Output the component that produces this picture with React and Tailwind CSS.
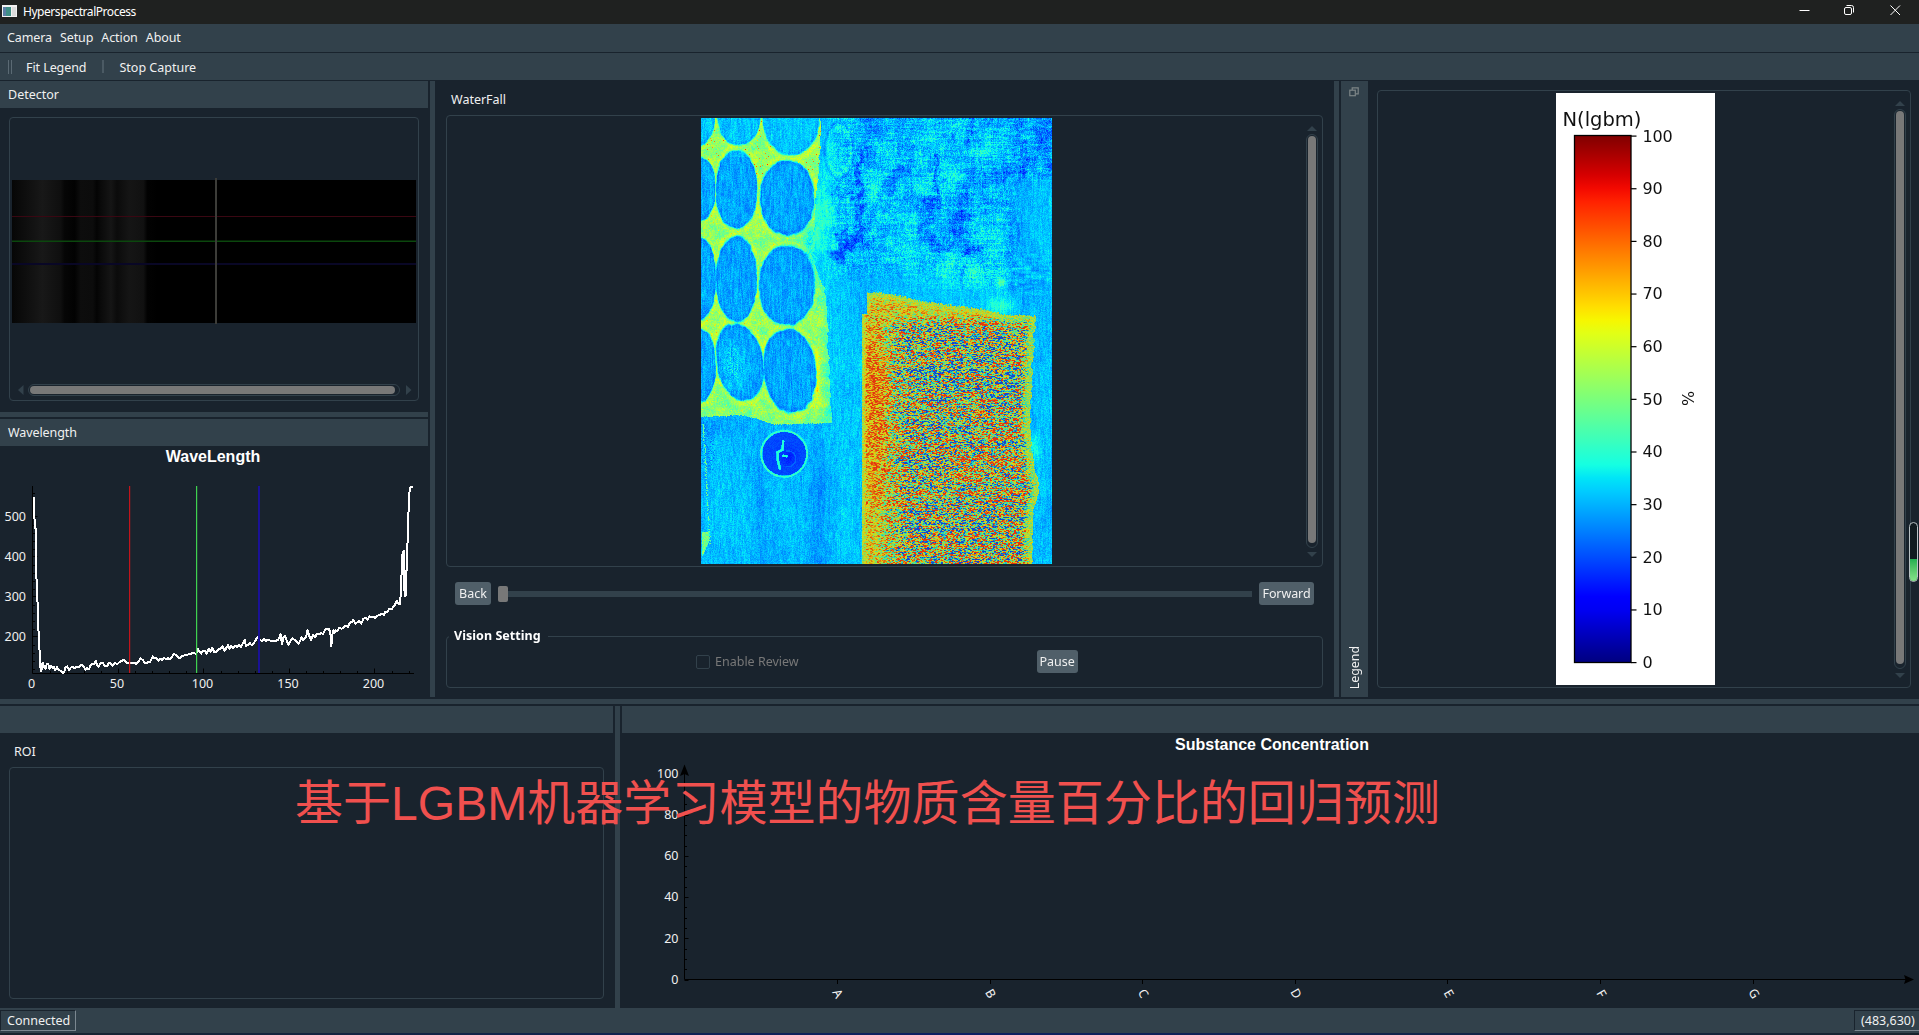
import { useLayoutEffect, useRef } from "react";

const clamp = (v, a = 0, b = 1) => Math.min(b, Math.max(a, v));
const lerp = (a, b, t) => a + (b - a) * t;
const smooth = (a, b, v) => {
  const t = clamp((v - a) / (b - a));
  return t * t * (3 - 2 * t);
};

const ramp = (stops, t) => {
  for (let i = 1; i < stops.length; i++) {
    if (t <= stops[i][0]) {
      const [x0, y0] = stops[i - 1];
      const [x1, y1] = stops[i];
      return lerp(y0, y1, (t - x0) / (x1 - x0));
    }
  }
  return stops[stops.length - 1][1];
};
const RED = [[0, 0], [0.35, 0], [0.66, 1], [0.89, 1], [1, 0.5]];
const GREEN = [[0, 0], [0.125, 0], [0.375, 1], [0.64, 1], [0.91, 0], [1, 0]];
const BLUE = [[0, 0.5], [0.11, 1], [0.34, 1], [0.65, 0], [1, 0]];
const jet = (v) => {
  const t = clamp(v);
  return [ramp(RED, t) * 255, ramp(GREEN, t) * 255, ramp(BLUE, t) * 255];
};

const hash = (x, y, s = 0) => {
  let h = (x * 374761393 + y * 668265263 + s * 1442695041) | 0;
  h = Math.imul(h ^ (h >>> 13), 1274126177);
  h ^= h >>> 16;
  return (h >>> 0) / 4294967295;
};
const noise = (x, y, s = 0) => {
  const xi = Math.floor(x);
  const yi = Math.floor(y);
  const fx = x - xi;
  const fy = y - yi;
  const u = fx * fx * (3 - 2 * fx);
  const w = fy * fy * (3 - 2 * fy);
  return lerp(
    lerp(hash(xi, yi, s), hash(xi + 1, yi, s), u),
    lerp(hash(xi, yi + 1, s), hash(xi + 1, yi + 1, s), u),
    w
  );
};
const fbm = (x, y, s = 0) =>
  noise(x, y, s) * 0.5 + noise(x * 2.1, y * 2.1, s + 1) * 0.28 + noise(x * 4.3, y * 4.3, s + 2) * 0.22;

const polyAt = (pts, v) => ramp(pts, v);

// Wells of the tray: centre x, centre y, radius x, radius y, slant
const WELLS = [
  [20, 20, 52, 86, 0], [145, 16, 64, 88, 0], [302, 14, 85, 120, 0],
  [28, 235, 47, 94, 0], [138, 237, 62, 117, 0], [290, 262, 81, 112, 0],
  [26, 505, 50, 124, 0], [138, 506, 61, 127, 0], [289, 525, 83, 119, 0],
  [26, 765, 50, 110, 0], [148, 755, 70, 114, 0.12], [298, 781, 78, 125, 0.06],
];
const TRAY_BOTTOM = [[33, 920], [150, 914], [200, 925], [250, 942], [430, 938]];
const TRAY_RIGHT = [[24, 392], [190, 386], [250, 374], [330, 372], [450, 372], [520, 396], [560, 408], [740, 414], [940, 424]];
const CLOTH_TOP = [[515, 612], [530, 545], [600, 550], [700, 573], [880, 597], [940, 612], [1038, 616]];
const CLOTH_RIGHT = [[540, 1036], [640, 1034], [740, 1027], [960, 1019], [1050, 1028], [1100, 1042], [1170, 1040], [1200, 1028], [1362, 1027]];
// Dark streaks in the upper right: x0, y0, x1, y1, half width, depth
const STREAKS = [
  [510, 130, 512, 260, 9, 0.13], [430, 250, 520, 250, 9, 0.08], [500, 290, 500, 370, 12, 0.1],
  [440, 430, 510, 370, 13, 0.13], [450, 380, 520, 390, 8, 0.1], [570, 260, 640, 180, 12, 0.08],
  [540, 340, 580, 270, 10, 0.06], [740, 130, 740, 290, 6, 0.1], [850, 30, 820, 110, 10, 0.09],
  [710, 270, 690, 370, 16, 0.08], [820, 250, 810, 380, 16, 0.09], [690, 370, 780, 410, 11, 0.09],
  [835, 412, 862, 412, 10, 0.12], [990, 60, 990, 190, 12, 0.08], [830, 210, 960, 180, 12, 0.06],
  [520, 40, 640, 60, 24, 0.05], [500, 160, 570, 40, 14, 0.05], [1060, 24, 1068, 170, 18, 0.07],
];

const segDist = (px, py, x0, y0, x1, y1) => {
  const dx = x1 - x0;
  const dy = y1 - y0;
  const t = clamp(((px - x0) * dx + (py - y0) * dy) / (dx * dx + dy * dy));
  return Math.hypot(px - x0 - t * dx, py - y0 - t * dy);
};
const blob = (u, v, x, y, rx, ry) => Math.exp(-(((u - x) / rx) ** 2 + ((v - y) / ry) ** 2));

function fieldAt(x, y) {
  const u = x * 3 + 33;
  const v = y * 3 + 24;
  const grain = hash(x, y, 3) - 0.5;
  const column = noise(x * 0.9, y * 0.12, 8) - 0.5;
  let t = 0.314 + grain * 0.06 + column * 0.055;
  t += (fbm(u / 90, v / 300, 20) - 0.5) * 0.05;

  // Smooth surface in the lower left
  if (v > 900 && u < 440) {
    t -= 0.008;
    t -= blob(u, v, 210, 1260, 22, 260) * 0.03 + blob(u, v, 385, 1180, 24, 260) * 0.035;
    t -= blob(u, v, 80, 950, 60, 30) * 0.03;
  }

  // Crumpled film in the upper right
  const film = smooth(385, 470, u) * (1 - smooth(430, 540, v - Math.max(0, u - 620) * 0.12)) * (1 - smooth(935, 1010, u) * smooth(180, 230, v));
  if (film > 0) {
    const wrinkle = fbm(u / 30, v / 40, 40) - 0.5;
    const row = noise(u / 60, y * 0.8, 60) - 0.5;
    t += film * (wrinkle * 0.13 + row * 0.07 + grain * 0.05 + 0.002);
    const wx = u + (fbm(u / 24, v / 24, 70) - 0.5) * 70;
    const wy = v + (fbm(u / 24, v / 24, 75) - 0.5) * 70;
    let dark = 0;
    for (const s of STREAKS) {
      const d = segDist(wx, wy, s[0], s[1], s[2], s[3]);
      dark = Math.max(dark, s[5] * (1 - smooth(s[4] * 0.3, s[4] * 2.3, d)));
    }
    t -= dark * (0.45 + noise(x * 0.6, y * 0.6, 77) * 0.75);
    t = Math.max(t, 0.16 + grain * 0.04);
  }
  t -= blob(u, v, 975, 330, 45, 170) * 0.035;
  t += blob(u, v, 820, 490, 130, 50) * (0.035 + (noise(x * 0.5, y * 0.6, 81) - 0.5) * 0.1);
  t += blob(u, v, 932, 515, 14, 16) * 0.14 + blob(u, v, 935, 585, 40, 24) * 0.09;
  t += blob(u, v, 385, 330, 55, 140) * (0.07 + (fbm(u / 20, v / 20, 83) - 0.5) * 0.12);
  t += blob(u, v, 1035, 1010, 18, 40) * 0.07;
  if (u > 960) t += (noise(x * 0.15, y * 0.5, 87) - 0.5) * 0.04 * blob(u, v, 1010, 490, 80, 70) * 3;

  // Faint oval next to the tray
  const oval = Math.hypot((u - 446) / 38, (v - 120) / 74);
  t += Math.exp(-(((oval - 0.94) / 0.09) ** 2)) * 0.03 - Math.exp(-(((oval - 1.14) / 0.07) ** 2)) * 0.04;
  t -= Math.exp(-(((Math.hypot((u - 458) / 16, (v - 130) / 28) - 1) / 0.2) ** 2)) * 0.035;

  // Tray with its wells
  const edge = polyAt(TRAY_RIGHT, v) + (noise(u / 8, v / 14, 90) - 0.5) * 8;
  const bottom = polyAt(TRAY_BOTTOM, u) + (hash(x, 1, 91) - 0.5) * 4;
  if (u < edge && v < bottom) {
    let nearest = 9;
    for (const [cx, cy, rx, ry, k] of WELLS) {
      const dx = (u - cx - (v - cy) * k) / rx;
      const dy = (v - cy) / ry;
      const d = Math.pow(Math.pow(Math.abs(dx), 2.15) + Math.pow(Math.abs(dy), 2.15), 1 / 2.15);
      nearest = Math.min(nearest, d);
    }
    const wob = (noise(u / 14, v / 14, 93) - 0.5) * 0.06;
    const m = smooth(0.97, 1.05, nearest + wob);
    let net = 0.515 + grain * 0.1 + (fbm(u / 22, v / 22, 95) - 0.5) * 0.16;
    net += Math.exp(-(((nearest - 1.1) / 0.06) ** 2)) * 0.05;
    net -= blob(u, v, 375, 430, 65, 100) * 0.14 + smooth(385, 420, u) * 0.07;
    net += blob(u, v, 380, 810, 10, 90) * 0.08;
    if (hash(x, y, 97) > 0.98) net += 0.1 + (v < 200 ? 0.15 : 0);
    let well = 0.288 + grain * 0.06 + column * 0.07 - Math.exp(-(((nearest - 0.95) / 0.05) ** 2)) * 0.02;
    well += blob(u, v, 125, 760, 35, 70) * (hash(x, y, 99) * 0.1);
    if (v < 140) well += 0.03;
    t = lerp(well, net, m);
  }

  // Coin
  const r = Math.hypot(u - 281, v - 1030);
  if (r < 74) {
    const inner = 0.195 + grain * 0.03 - blob(u, v, 295, 1040, 22, 24) * 0.04;
    t = r < 65 ? inner : lerp(t, 0.41 + grain * 0.08, 1 - smooth(1, 4.5, Math.abs(r - 69)));
    const mark = Math.min(
      segDist(u, v, 278, 992, 276, 1018), segDist(u, v, 276, 1018, 260, 1026),
      segDist(u, v, 262, 1026, 262, 1050), segDist(u, v, 262, 1050, 268, 1074), segDist(u, v, 278, 1036, 288, 1037)
    );
    if (mark < 4.2) t = 0.42 - mark * 0.02;
    if (Math.abs(Math.hypot(u - 292, v - 1045) - 24) < 2 && u > 285) t = 0.225;
  }

  // Speckled strip on the left border
  const strip = 44 + (v - 1040) * 0.055;
  if (v > 940 && v < 1300 && Math.abs(u - strip) < 3 && hash(x, y, 101) > 0.5) t = 0.4 + hash(x, y, 102) * 0.1;
  if (v > 930 && v < 1080 && u < 75 && hash(x, y, 103) > 0.85) t = 0.24;
  if (v > 1265 && v < 1345 && u < 55 - Math.max(0, v - 1295) * 0.45 && u > 33) t = 0.48 + grain * 0.14;

  // Woven cloth
  const left = v < 612 ? 528 : 514;
  const right = polyAt(CLOTH_RIGHT, v) + (noise(3, v / 10, 104) - 0.5) * 8;
  const top = polyAt(CLOTH_TOP, u) + (hash(x, 2, 105) - 0.5) * 6;
  if (u > left && u < right && v > top) {
    const xx = Math.floor(x / 2 + (hash(0, y, 112) > 0.5 ? 0.5 : 0));
    const n = hash(xx, y, 106) * 0.62 + hash(x, y, 110) * 0.22 + noise(x * 0.3, y * 0.5, 107) * 0.16;
    const band = noise(u / 120, y * 0.34, 108) - 0.5;
    const fine = (y % 3 === 0 ? -0.06 : 0.02) + (noise(u / 50, y * 0.9, 111) - 0.5) * 0.18;
    const cool = smooth(600, 660, v) * smooth(540, 660, u);
    const hot = blob(u, v, 560, 930, 45, 240) * 0.12 + blob(u, v, 550, 780, 35, 130) * 0.05;
    const rim = Math.min((u - left) * 1.2, (right - u) * 0.55, (v - top) * 0.8);
    t = 0.645 + (n - 0.5) * lerp(0.5, 1.3, cool) + (band * 0.3 + fine) * cool - cool * 0.085 + hot;
    t -= blob(u, v, 850, 780, 170, 130) * 0.06 + blob(u, v, 760, 1220, 200, 90) * 0.03;
    if (rim < 16) t = lerp(0.55 + grain * 0.25, t, rim / 20);
    t = clamp(t, 0.19, 0.86);
    return [t, true];
  }
  return [t, false];
}

function WaterfallImage() {
  const ref = useRef(null);
  useLayoutEffect(() => {
    const ctx = ref.current.getContext("2d");
    const W = 351;
    const H = 446;
    const img = ctx.createImageData(W, H);
    for (let y = 0; y < H; y++) {
      for (let x = 0; x < W; x++) {
        const [t, cloth] = fieldAt(x, y);
        let [r, g, b] = jet(t);
        if (cloth) {
          r = r * 0.8 + 22;
          g = g * 0.8 + 16;
          b = b * 0.74 + 16;
        }
        const i = (y * W + x) * 4;
        img.data[i] = r;
        img.data[i + 1] = g;
        img.data[i + 2] = b;
        img.data[i + 3] = 255;
      }
    }
    ctx.putImageData(img, 0, 0);
  }, []);
  return <canvas ref={ref} width={351} height={446} className="block h-[446px] w-[351px]" />;
}

const WAVE =
  "101,289 102,380 105,385 107,500 109,600 112,610 113,690 116,700 117,765 119,800 122,814 124,800 126,787 131,800 135,805 138,792 143,791 147,806 151,797 156,802 160,800 164,811 169,801 174,808 179,811 185,817 191,817 194,803 200,798 205,810 210,803 216,799 221,803 227,801 233,801 238,798 244,793 249,799 254,808 259,803 265,808 270,795 276,791 281,792 286,782 290,795 294,800 300,789 306,787 312,796 320,797 325,787 330,789 336,797 343,788 350,792 357,785 363,783 369,778 375,784 381,789 388,787 394,788 401,788 407,791 413,785 420,775 427,780 433,788 440,787 447,786 452,779 456,769 461,775 466,773 473,782 478,775 484,779 490,773 496,777 502,774 508,778 515,769 520,762 527,764 532,771 537,774 543,768 550,766 557,765 564,762 571,761 579,757 586,762 592,747 597,755 602,760 607,752 612,752 618,760 624,746 629,755 635,742 641,757 647,754 653,748 660,745 666,739 672,751 677,744 682,735 687,746 692,737 698,744 704,737 710,740 716,734 722,740 727,728 732,719 736,737 742,735 748,729 753,735 758,731 764,722 770,711 777,720 784,722 790,717 796,723 802,718 810,722 818,721 826,722 832,719 836,712 840,701 844,732 849,711 854,708 859,723 864,733 870,722 875,714 882,719 888,724 894,731 898,723 903,711 908,720 914,713 918,704 921,689 926,707 931,719 937,705 943,712 949,701 955,702 961,699 967,701 973,690 979,685 985,687 989,695 992,739 996,700 998,690 1001,700 1004,690 1010,692 1016,683 1023,686 1030,680 1037,676 1042,680 1048,667 1054,665 1058,659 1065,670 1071,666 1076,662 1082,671 1088,656 1095,652 1101,658 1107,648 1113,651 1119,651 1125,653 1131,646 1138,644 1144,640 1150,644 1155,634 1160,636 1166,625 1172,628 1178,620 1184,612 1189,602 1194,612 1199,610 1201,560 1204,500 1206,455 1209,452 1211,560 1213,588 1216,585 1218,500 1221,420 1223,350 1227,270 1229,261 1238,260";

const ui = "font-['Noto_Sans','Noto_Sans_CJK_SC',sans-serif]";

function Detector() {
  return (
    <div className="ml-[9px] mt-[9px] flex h-[284px] w-[410px] flex-col rounded border border-[#32414b]">
      <svg className="mt-[60px] ml-[2px] block" width="404" height="146" viewBox="0 0 404 146">
        <defs>
          <linearGradient id="bands" x1="0" x2="1" y1="0" y2="0">
            <stop offset="0" stopColor="#060606" />
            <stop offset="0.02" stopColor="#0b0b0b" />
            <stop offset="0.055" stopColor="#131313" />
            <stop offset="0.075" stopColor="#181818" />
            <stop offset="0.1" stopColor="#131313" />
            <stop offset="0.12" stopColor="#0f0f0f" />
            <stop offset="0.13" stopColor="#060606" />
            <stop offset="0.155" stopColor="#020202" />
            <stop offset="0.17" stopColor="#0d0d0d" />
            <stop offset="0.2" stopColor="#0c0c0c" />
            <stop offset="0.21" stopColor="#040404" />
            <stop offset="0.22" stopColor="#0a0a0a" />
            <stop offset="0.245" stopColor="#151515" />
            <stop offset="0.26" stopColor="#0b0b0b" />
            <stop offset="0.29" stopColor="#151515" />
            <stop offset="0.325" stopColor="#111111" />
            <stop offset="0.335" stopColor="#020202" />
            <stop offset="0.36" stopColor="#000000" />
          </linearGradient>
        </defs>
        <rect x="0" y="2" width="404" height="143" fill="#000" />
        <rect x="0" y="2" width="404" height="143" fill="url(#bands)" />
        <rect x="0" y="38" width="404" height="1" fill="#3a0712" />
        <rect x="0" y="62.5" width="404" height="1.5" fill="#0b470d" />
        <rect x="0" y="85" width="404" height="2" fill="#090726" />
        <rect x="203" y="0" width="2" height="146" fill="#3c3c38" />
      </svg>
      <div className="mt-auto mb-[4px] flex h-[12px] items-center pl-[8px] pr-[6px]">
        <svg width="6" height="10" viewBox="0 0 6 10"><path d="M5.5 0v10L0 5z" fill="#32414b" /></svg>
        <div className="ml-[4px] h-[12px] w-[372px] rounded-full border border-[#32414b] p-px">
          <div className="h-[8px] w-[365px] rounded-full bg-[#787878]" />
        </div>
        <svg className="ml-auto" width="6" height="10" viewBox="0 0 6 10"><path d="M0 0v10L5.5 5z" fill="#32414b" /></svg>
      </div>
    </div>
  );
}

function WavelengthChart() {
  const minorY = [];
  for (let v = 120; v <= 560; v += 20) if (v % 100) minorY.push(716.5 - 0.4 * v);
  const minorX = [];
  for (let v = 10; v < 223; v += 10) if (v % 50) minorX.push(32.5 + v * 1.71);
  return (
    <svg className={`block ${ui}`} width="428" height="251" viewBox="0 446 428 251" fill="#f0f0f0" fontSize="12.5">
      <text x="213" y="462" textAnchor="middle" fontSize="16" fontWeight="700" fill="#fff" className="font-['Liberation_Sans',sans-serif]">WaveLength</text>
      <g stroke="#000" strokeWidth="1">
        <path d="M32.5 486V673.5H414" fill="none" />
        {[200, 300, 400, 500].map((v) => <path key={v} d={`M32.5 ${716.5 - 0.4 * v}h5`} />)}
        {minorY.map((y) => <path key={y} d={`M32.5 ${Math.round(y) + 0.5}h2.5`} />)}
        {[50, 100, 150, 200].map((v) => <path key={v} d={`M${Math.round(32 + v * 1.71) + 0.5} 673.5v-5`} />)}
        {minorX.map((x) => <path key={x} d={`M${Math.round(x) + 0.5} 673.5v-2.5`} />)}
      </g>
      {[500, 400, 300, 200].map((v) => <text key={v} x="26" y={721 - 0.4 * v} textAnchor="end">{v}</text>)}
      {[0, 50, 100, 150, 200].map((v) => <text key={v} x={31.5 + v * 1.71} y="688" textAnchor="middle">{v}</text>)}
      <polyline points={WAVE} transform="translate(0.600 400.200) scale(.33333)" fill="none" stroke="#fff" strokeWidth="6" strokeLinejoin="round" shapeRendering="crispEdges" />
      <rect x="129" y="486" width="1.2" height="187" fill="#c3141b" />
      <rect x="196" y="486" width="1.2" height="187" fill="#3fd24f" />
      <rect x="258" y="486" width="2" height="187" fill="#1a1296" />
    </svg>
  );
}

function VScroll({ groove, thumb }) {
  return (
    <div className="flex h-full w-[12px] flex-col items-center">
      <svg width="10" height="5" viewBox="0 0 10 5"><path d="M0 5h10L5 0z" fill="#32414b" /></svg>
      <div className="mt-[3px] w-[12px] rounded-full border border-[#32414b] p-px" style={{ height: groove }}>
        <div className="w-[8px] rounded-full bg-[#787878]" style={{ height: thumb }} />
      </div>
      <svg className="mt-[4px]" width="10" height="5" viewBox="0 0 10 5"><path d="M0 0h10L5 5z" fill="#32414b" /></svg>
    </div>
  );
}

function Legend() {
  const stops = Array.from({ length: 41 }, (_, i) => i / 40);
  return (
    <svg className="block bg-white font-['DejaVu_Sans',sans-serif]" width="159" height="592" viewBox="1556 93 159 592" fontSize="16" fill="#111">
      <defs>
        <linearGradient id="jet" x1="0" x2="0" y1="1" y2="0">
          {stops.map((s) => (
            <stop key={s} offset={s} stopColor={`rgb(${jet(s).map(Math.round).join(",")})`} />
          ))}
        </linearGradient>
      </defs>
      <text x="1562.5" y="125.5" fontSize="19.5">N(lgbm)</text>
      <rect x="1574.5" y="135.5" width="56.5" height="527" fill="url(#jet)" stroke="#000" strokeWidth="1.3" />
      {Array.from({ length: 11 }, (_, i) => (
        <g key={i}>
          <rect x="1631" y={662 - i * 52.65} width="5.5" height="1.2" fill="#000" />
          <text x="1642.5" y={668 - i * 52.65} letterSpacing="-0.2">{i * 10}</text>
        </g>
      ))}
      <text transform="translate(1693.500 406) rotate(-90)">%</text>
    </svg>
  );
}

function ConcentrationChart() {
  const ys = (v) => 979.5 - v * 2.06;
  return (
    <svg className={`block ${ui}`} width="1297" height="275" viewBox="622 733 1297 275" fill="#f0f0f0" fontSize="12.5">
      <text x="1272" y="750" textAnchor="middle" fontSize="16" fontWeight="700" fill="#fff" className="font-['Liberation_Sans',sans-serif]">Substance Concentration</text>
      <path d="M684.5 768V979.5H1908" fill="none" stroke="#000" />
      <path d="M684.5 764.5l4.5 11.5-4.5-2-4.5 2z" fill="#000" />
      <path d="M1914 979.5l-10-4.5 1.5 4.500-1.5 4.500z" fill="#000" />
      {[0, 20, 40, 60, 80, 100].map((v) => <text key={v} x="678.5" y={ys(v) + 4.2} textAnchor="end">{v}</text>)}
      {Array.from({ length: 20 }, (_, i) => (
        <path key={i} d={`M684.5 ${Math.round(ys(i * 5)) + 0.5}h${i % 4 ? 2.5 : 4}`} stroke="#000" />
      ))}
      {["A", "B", "C", "D", "E", "F", "G"].map((c, i) => (
        <g key={c}>
          <path d={`M${Math.round(837 + i * 152.6) + 0.5} 979.5v4.5`} stroke="#000" />
          <text transform={`translate(${838 + i * 152.7} 993.500) rotate(60)`} x="0" y="4.5" textAnchor="middle">{c}</text>
        </g>
      ))}
    </svg>
  );
}

const btn = "flex h-[23px] items-center justify-center rounded-[3px] bg-[#505f69] pt-[2px] text-[#f0f0f0]";

export default function App() {
  return (
    <div className={`relative flex h-[1035px] w-[1919px] flex-col overflow-hidden bg-[#19232d] text-[12.5px] leading-none text-[#f0f0f0] ${ui}`}>
      <header className="flex h-[24px] items-center bg-[#1f2120] pl-[2px] text-[12px] text-white">
        <svg className="mb-[2px]" width="15" height="12" viewBox="0 0 15 12">
          <rect width="15" height="12" fill="#f2f2f2" />
          <rect x="1" y="2" width="8" height="9" fill="#3f8f86" />
          <rect x="1" y="2" width="3" height="9" fill="#5c7fa6" />
          <rect x="10" y="2" width="4" height="9" fill="#dcdcdc" />
        </svg>
        <span className="ml-[6px] tracking-[-0.45px]">HyperspectralProcess</span>
        <svg className="ml-auto mr-[17px] mb-[4px]" width="104" height="12" viewBox="0 0 104 12" fill="none" stroke="#fff" strokeWidth="1">
          <path d="M1.5 6.500h10" />
          <rect x="46.5" y="3.5" width="7" height="7" rx="1.5" />
          <path d="M48.5 1.5h5a2 2 0 0 1 2 2v5" />
          <path d="M92.5 1.500l9.500 9.500M102 1.500l-9.500 9.500" />
        </svg>
      </header>

      <nav className="flex h-[29px] items-center gap-[8px] border-b border-[#19232d] bg-[#32414b] pl-[7px] pt-px tracking-[-0.1px]">
        <span>Camera</span>
        <span>Setup</span>
        <span>Action</span>
        <span>About</span>
      </nav>

      <div className="flex h-[28px] items-center border-b border-[#19232d] bg-[#32414b] pl-[8px]">
        <div className="h-[14px] w-[4px] border-x border-[#5b6a74]" />
        <span className="ml-[14px] pt-[3px] tracking-[-0.08px]">Fit Legend</span>
        <div className="ml-[16px] h-[13px] w-[2px] bg-[#4b5a64]" />
        <span className="ml-[15px] pt-[3px]">Stop Capture</span>
      </div>

      <main className="flex h-[616px]">
        <section className="flex w-[428px] flex-col">
          <div className="flex h-[27px] items-center bg-[#32414b] pt-[2px] pl-[8px]">Detector</div>
          <div className="h-[304px]"><Detector /></div>
          <div className="mb-[2px] h-[5px] bg-[#32414b]" />
          <div className="flex h-[27px] items-center bg-[#32414b] pt-[2px] pl-[8px] tracking-[-0.08px]">Wavelength</div>
          <WavelengthChart />
        </section>
        <div className="ml-[2px] w-[5px] bg-[#32414b]" />

        <section className="flex w-[899px] flex-col px-[11px]">
          <div className="flex h-[34px] items-center pt-[5px] pl-[5px]">WaterFall</div>
          <div className="flex h-[452px] rounded border border-[#32414b] pr-[4px]">
            <div className="ml-[254px] mt-[2px]"><WaterfallImage /></div>
            <div className="ml-auto pt-[10px]"><VScroll groove="414px" thumb="407px" /></div>
          </div>
          <div className="mt-[15px] flex h-[23px] items-center pl-[9px] pr-[9px]">
            <div className={`${btn} w-[36px]`}>Back</div>
            <div className="ml-[7px] flex flex-1 items-center">
              <div className="h-[16px] w-[10px] rounded-[2px] bg-[#787878]" />
              <div className="h-[6px] flex-1 bg-[#32414b]" />
            </div>
            <div className={`${btn} ml-[7px] w-[55px] tracking-[-0.1px]`}>Forward</div>
          </div>
          <fieldset className="mt-[24px] h-[59px] rounded border border-[#32414b]">
            <legend className="ml-[2px] pl-[5px] pr-[7px] text-[12.5px] font-bold leading-[14px] tracking-[0.05px] text-white">Vision Setting</legend>
            <div className="flex w-full items-center pt-[7px] pl-[249px]">
              <div className="h-[14px] w-[14px] rounded-[2px] border border-[#32414b]" />
              <span className="ml-[5px] pt-[2px] text-[#787878]">Enable Review</span>
              <div className={`${btn} ml-[238px] w-[41px]`}>Pause</div>
            </div>
          </fieldset>
        </section>

        <div className="w-[5px] bg-[#32414b]" />
        <div className="ml-[2px] flex w-[27px] flex-col items-center justify-between bg-[#32414b] pt-[6px] pr-px pb-[8px]">
          <svg width="10" height="10" viewBox="0 0 10 10" fill="none" stroke="#7d8587" strokeWidth="1.2">
            <rect x="0.800" y="3.200" width="5.500" height="5.500" />
            <path d="M3.200 3V0.800h6v6H6.500" />
          </svg>
          <span className="mr-[-3px] rotate-180 tracking-[-0.1px] [writing-mode:vertical-rl]">Legend</span>
        </div>

        <section className="w-[551px] pt-[9px] pl-[9px]">
          <div className="flex h-[598px] w-[534px] rounded border border-[#32414b]">
            <div className="ml-[178px] mt-[2px]"><Legend /></div>
            <div className="ml-auto mr-[4px] pt-[10px]"><VScroll groove="560px" thumb="553px" /></div>
          </div>
        </section>
      </main>

      <div className="my-[2px] h-[5px] shrink-0 bg-[#32414b]" />

      <div className="flex h-[302px]">
        <section className="w-[613px]">
          <div className="h-[27px] bg-[#32414b]" />
          <div className="flex h-[34px] items-center pt-[5px] pl-[14px]">ROI</div>
          <div className="ml-[9px] h-[232px] w-[595px] rounded border border-[#32414b]" />
        </section>
        <div className="mx-[2px] w-[5px] bg-[#32414b]" />
        <section className="flex-1">
          <div className="h-[27px] bg-[#32414b]" />
          <ConcentrationChart />
        </section>
      </div>

      <footer className="flex h-[25px] items-start justify-between bg-[#32414b] pt-[2px]">
        <div className="flex h-[21px] w-[76px] items-center border border-t-[#19232d] border-l-[#19232d] border-r-[#7b8790] border-b-[#7b8790] pt-[2px] pl-[6px]">Connected</div>
        <div className="flex h-[21px] w-[65px] items-center border border-r-0 border-t-[#19232d] border-l-[#19232d] border-b-[#7b8790] pt-[2px] pl-[6px]">(483,630)</div>
      </footer>
      <div className="h-[2px] bg-linear-to-r from-[#19232d] via-[#0e1f63] to-[#19232d]" />

      <div className="absolute left-[1909px] top-[522px] flex h-[60px] w-[9px] flex-col justify-end overflow-hidden rounded-full border border-[#b9c0c4] bg-[#111a20]">
        <div className="h-[22px] bg-linear-to-b from-[#1fae50] to-[#86e58a]" />
      </div>

      <div className="absolute left-[295px] top-[774px] whitespace-nowrap font-['Liberation_Sans','Noto_Sans_CJK_SC',sans-serif] text-[48px] leading-[60px] tracking-[0.04px] text-[#f0504e]">
        基于LGBM机器学习模型的物质含量百分比的回归预测
      </div>
    </div>
  );
}
